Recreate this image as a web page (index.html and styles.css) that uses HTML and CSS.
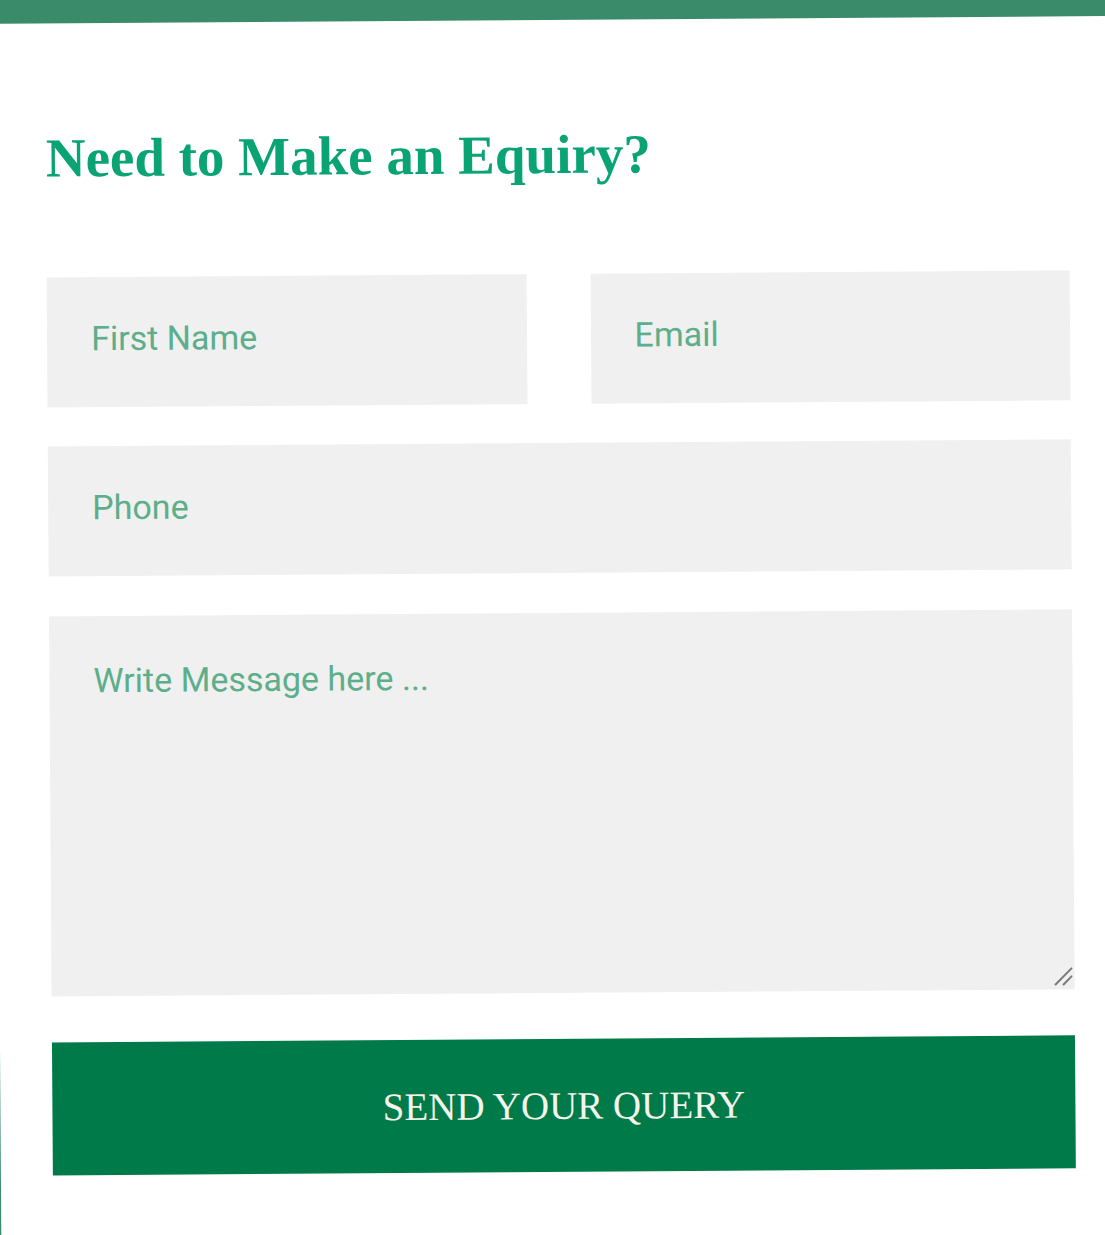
FILE: index.html
```html
<!DOCTYPE html>
<html lang="en">
<head>
<meta charset="utf-8">
<title>Enquiry</title>
<link rel="stylesheet" href="styles.css">
</head>
<body>
<div class="page">
  <section class="enquiry">
    <h2 class="title">Need to Make an Equiry?</h2>
    <form class="form">
      <div class="row two">
        <input class="field" type="text" placeholder="First Name">
        <input class="field" type="email" placeholder="Email">
      </div>
      <div class="row">
        <input class="field" type="tel" placeholder="Phone">
      </div>
      <div class="row message">
        <textarea class="field area" placeholder="Write Message here ..."></textarea>
        <svg class="grip" width="20" height="20" viewBox="0 0 20 20" aria-hidden="true">
          <path d="M2 18 L18 2 M10 18 L18 10" stroke="#7a7a7a" stroke-width="2" stroke-linecap="round" fill="none"/>
        </svg>
      </div>
      <button class="send" type="button">SEND YOUR QUERY</button>
    </form>
  </section>
</div>
</body>
</html>
```
FILE: styles.css
```css
html, body {
  margin: 0;
  padding: 0;
  background: #ffffff;
  overflow: hidden;
}
.page {
  box-sizing: border-box;
  width: 1130px;
  min-height: 1270px;
  margin: -10px 0 0 -5px;
  border-top: 30px solid #398b6a;
  border-left: 2px solid #398b6a;
  background: #ffffff;
  transform: rotate(-0.4deg);
  transform-origin: 557px 627px;
}
.enquiry {
  width: 1023px;
  padding: 0 0 0 52px;
}
.title {
  margin: 0;
  padding-top: 104px;
  font-family: "Liberation Serif", "Times New Roman", serif;
  font-weight: bold;
  font-size: 55px;
  line-height: 62px;
  color: #0aa474;
}
.form {
  display: flex;
  flex-direction: column;
  margin-top: 88px;
}
.row {
  position: relative;
  display: flex;
  margin-bottom: 40px;
}
.row.two {
  gap: 64px;
  margin-bottom: 39px;
}
.row.message {
  margin-bottom: 46px;
}
.field {
  box-sizing: border-box;
  flex: 1 1 0;
  min-width: 0;
  height: 130px;
  border: none;
  outline: none;
  background: #f0f0f0;
  padding: 0 20px 8px 44px;
  font-family: Roboto, "Liberation Sans", sans-serif;
  font-size: 34px;
  color: #333333;
}
.field::placeholder {
  color: #5dae8a;
  opacity: 1;
}
.area {
  height: 380px;
  padding: 44px 20px 0 44px;
  resize: none;
  line-height: normal;
}
.grip {
  position: absolute;
  right: 1px;
  bottom: 3px;
}
.send {
  height: 133px;
  width: 100%;
  border: none;
  background: #007a48;
  color: #f4f4ec;
  font-family: "Liberation Serif", "Times New Roman", serif;
  font-size: 39px;
  cursor: pointer;
  padding: 0;
}
```
